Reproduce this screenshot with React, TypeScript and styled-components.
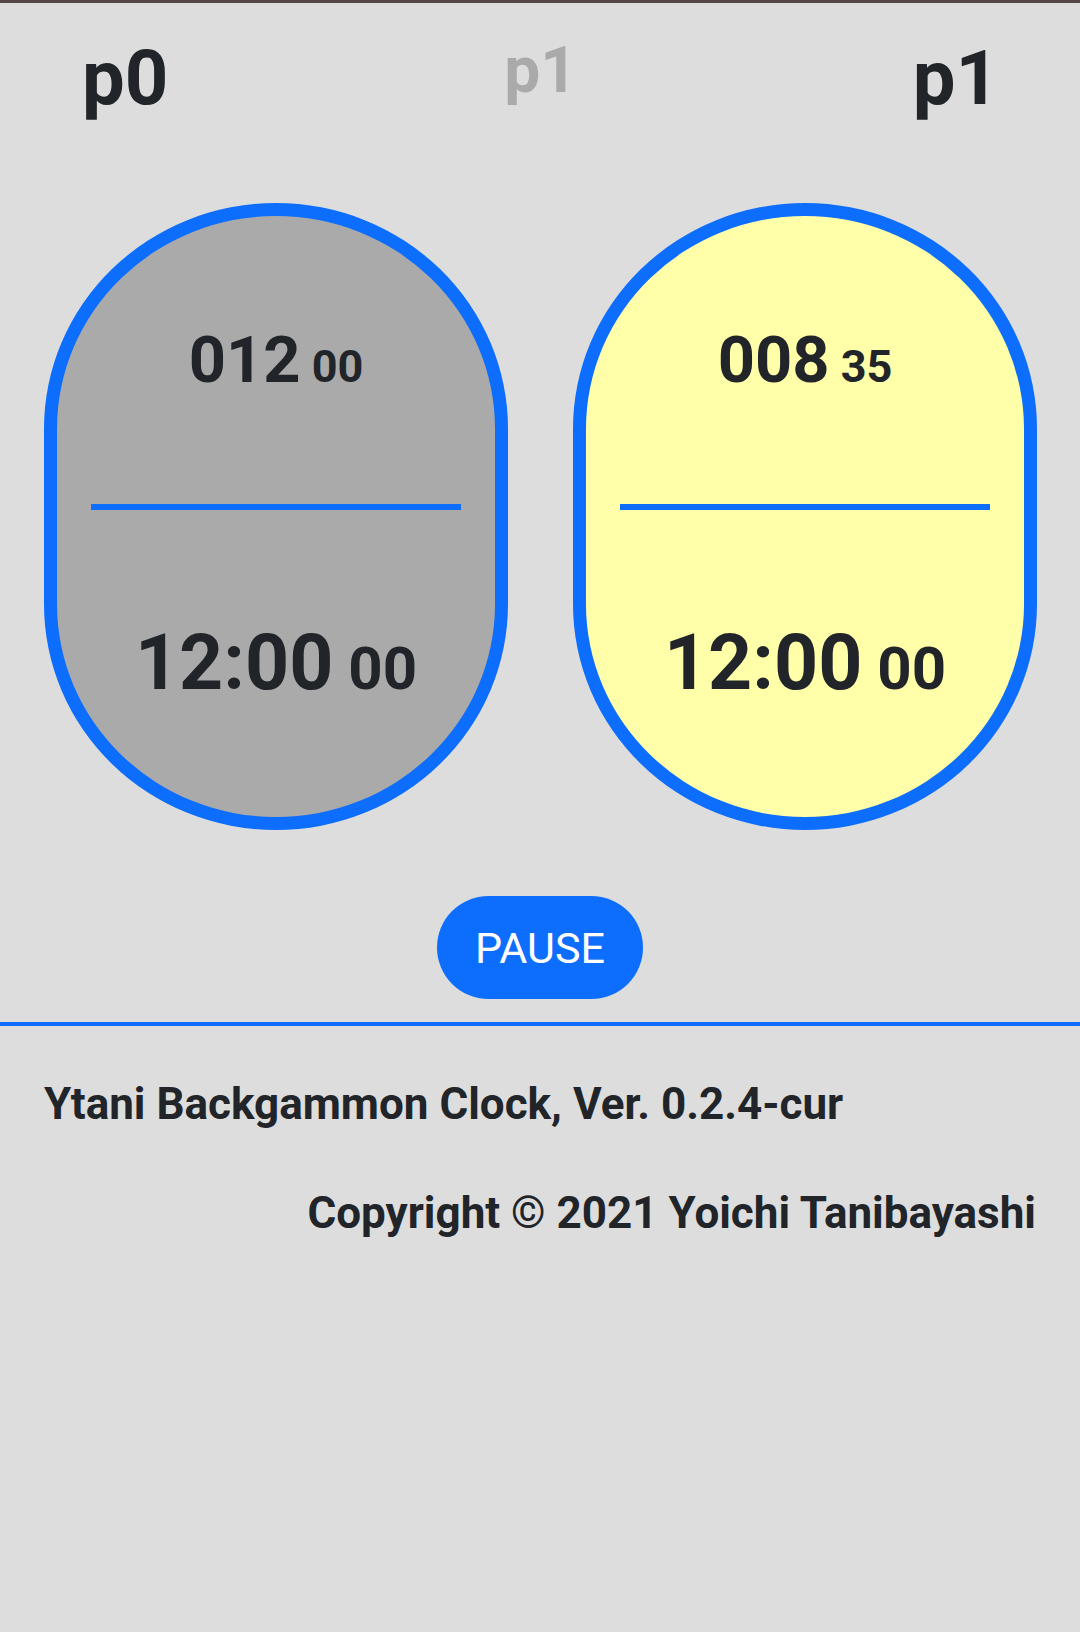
import styled, { createGlobalStyle } from 'styled-components';

const GlobalStyle = createGlobalStyle`
    html, body {
        margin: 0;
        padding: 0;
        background-color: #dddddd;
    }
    body {
        font-family: Roboto, 'Liberation Sans', sans-serif;
        color: #212529;
        border-top: 3px solid #554545;
        min-height: 1629px;
    }
`;

interface ClockProps {
    active: boolean;
    score: string;
    scoreSub: string;
    time: string;
    timeSub: string;
}

const Clock = ({ active, score, scoreSub, time, timeSub }: ClockProps) => (
    <ClockBody $active={active}>
        <ClockHalf $height='288px'>
            <BigText $size={65}>
                {score}
                <SubText $size={45}> {scoreSub}</SubText>
            </BigText>
        </ClockHalf>
        <Divider />
        <ClockHalf>
            <BigText $size={77}>
                {time}
                <SubText $size={60}> {timeSub}</SubText>
            </BigText>
        </ClockHalf>
    </ClockBody>
);

const App = () => {
    return (
        <>
            <GlobalStyle />
            <Header>
                <PlayerName>p0</PlayerName>
                <TurnName>p1</TurnName>
                <PlayerName>p1</PlayerName>
            </Header>
            <ClockRow>
                <Clock
                    active={false}
                    score='012'
                    scoreSub='00'
                    time='12:00'
                    timeSub='00'
                />
                <Clock
                    active={true}
                    score='008'
                    scoreSub='35'
                    time='12:00'
                    timeSub='00'
                />
            </ClockRow>
            <ButtonRow>
                <PauseButton type='button'>PAUSE</PauseButton>
            </ButtonRow>
            <Footer>
                <FooterText>Ytani Backgammon Clock, Ver. 0.2.4-cur</FooterText>
                <Copyright>Copyright © 2021 Yoichi Tanibayashi</Copyright>
            </Footer>
        </>
    );
};

const Header = styled.div`
    display: flex;
    justify-content: space-between;
    align-items: flex-start;
    padding: 30px 81px 0 82px;
    height: 200px;
    box-sizing: border-box;
`;

const PlayerName = styled.div`
    font-size: 76px;
    font-weight: 700;
    line-height: 1.2;
`;

const TurnName = styled.div`
    font-size: 64px;
    font-weight: 700;
    line-height: 1.2;
    color: #aaaaaa;
`;

const ClockRow = styled.div`
    display: flex;
    gap: 65px;
    padding: 0 43px 0 44px;
`;

const ClockBody = styled.div<{ $active: boolean }>`
    flex: 1;
    height: 627px;
    box-sizing: border-box;
    border: 13px solid #0d6efd;
    border-radius: 50% / 36%;
    background-color: ${(props) => (props.$active ? '#ffffaa' : '#aaaaaa')};
    display: flex;
    flex-direction: column;
    align-items: center;
`;

const ClockHalf = styled.div<{ $height?: string }>`
    display: flex;
    align-items: center;
    justify-content: center;
    width: 100%;
    height: ${(props) => props.$height ?? 'auto'};
    flex: ${(props) => (props.$height ? 'none' : '1')};
`;

const Divider = styled.div`
    width: 370px;
    height: 6px;
    background-color: #0d6efd;
`;

const BigText = styled.div<{ $size: number }>`
    font-size: ${(props) => props.$size}px;
    font-weight: 700;
    line-height: 1.2;
    white-space: nowrap;
`;

const SubText = styled.span<{ $size: number }>`
    font-size: ${(props) => props.$size}px;
    line-height: 1;
`;

const ButtonRow = styled.div`
    display: flex;
    justify-content: center;
    padding: 66px 0 23px;
    border-bottom: 4px solid #0d6efd;
`;

const PauseButton = styled.button`
    height: 103px;
    padding: 0 38px;
    border: none;
    border-radius: 52px;
    background-color: #0d6efd;
    color: white;
    font-family: Roboto, 'Liberation Sans', sans-serif;
    font-size: 43px;
    font-weight: 400;
`;

const Footer = styled.div`
    display: flex;
    flex-direction: column;
    padding: 52px 44px 0;
    gap: 56px;
`;

const FooterText = styled.div`
    font-size: 44px;
    font-weight: 700;
    line-height: 1.2;
`;

const Copyright = styled(FooterText)`
    text-align: right;
`;

export default App;
